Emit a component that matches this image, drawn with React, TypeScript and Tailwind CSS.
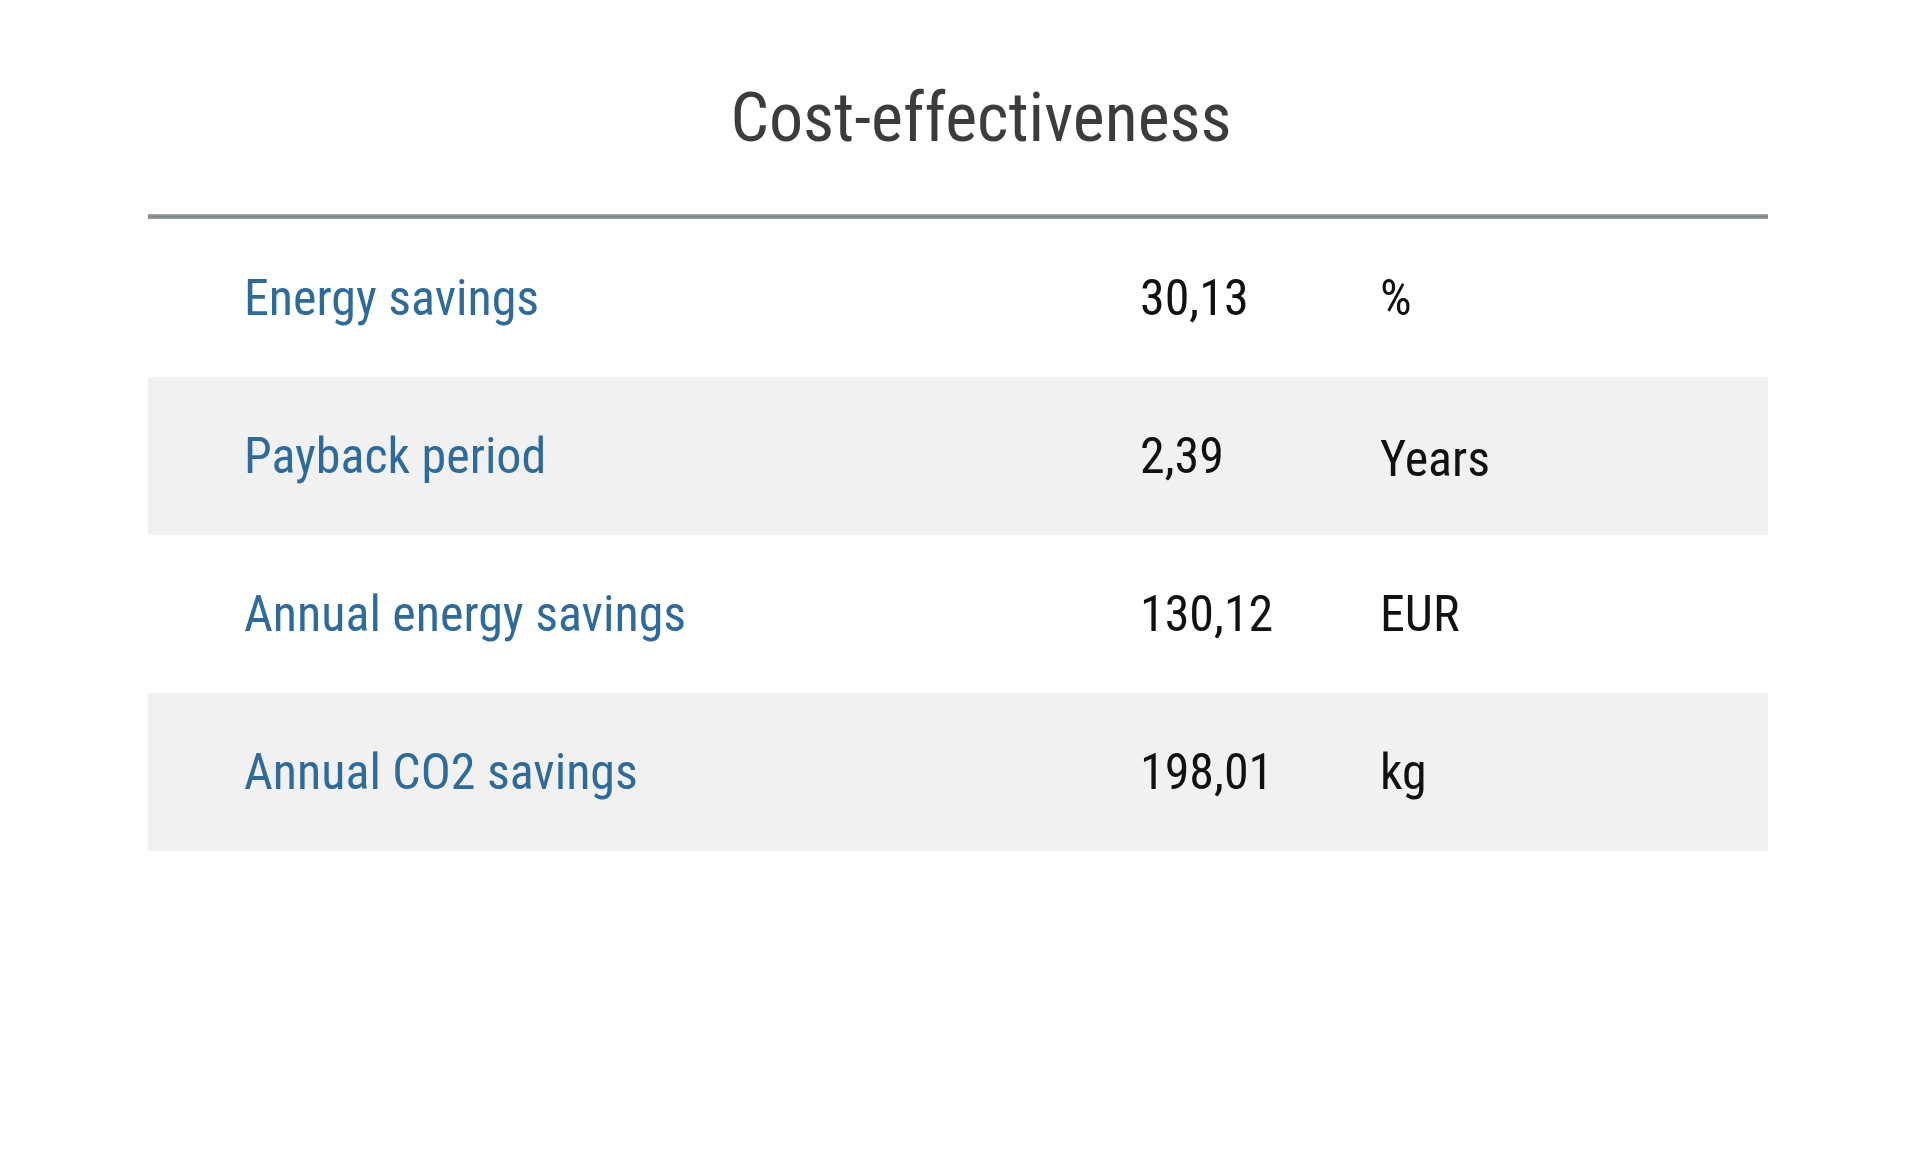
import React from "react";

interface Row {
  label: string;
  value: string;
  unit: string;
  shaded: boolean;
}

const rows: Row[] = [
  { label: "Energy savings", value: "30,13", unit: "%", shaded: false },
  { label: "Payback period", value: "2,39", unit: "Years", shaded: true },
  { label: "Annual energy savings", value: "130,12", unit: "EUR", shaded: false },
  { label: "Annual CO2 savings", value: "198,01", unit: "kg", shaded: true },
];

const font = { fontFamily: '"Roboto Condensed", "Liberation Sans Narrow", "DejaVu Sans Condensed", sans-serif' };

export default function App() {
  return (
    <div className="min-h-screen w-full bg-white" style={font}>
      <div className="ml-[148px] w-[1620px] pt-[74px]">
        <h1 className="pl-[46px] text-center text-[68px] font-normal leading-[88px] text-[#3c3c3c]">
          Cost-effectiveness
        </h1>
        <div className="mt-[52px] h-[5px] bg-gradient-to-b from-[#a9aeb1] via-[#7f8589] to-[#9aa0a3]" />
        <div className="flex flex-col">
          {rows.map((row) => (
            <div
              key={row.label}
              className={`flex h-[158px] items-center ${row.shaded ? "bg-[#f1f1f1]" : "bg-white"}`}
            >
              <div className="w-[992px] pl-[96px] text-[50px] text-[#2f6a99]">{row.label}</div>
              <div className="w-[240px] text-[50px] text-[#111111]">{row.value}</div>
              <div className={`text-[50px] text-[#111111] ${row.unit === "Years" ? "pt-[6px]" : ""}`}>{row.unit}</div>
            </div>
          ))}
        </div>
      </div>
    </div>
  );
}
